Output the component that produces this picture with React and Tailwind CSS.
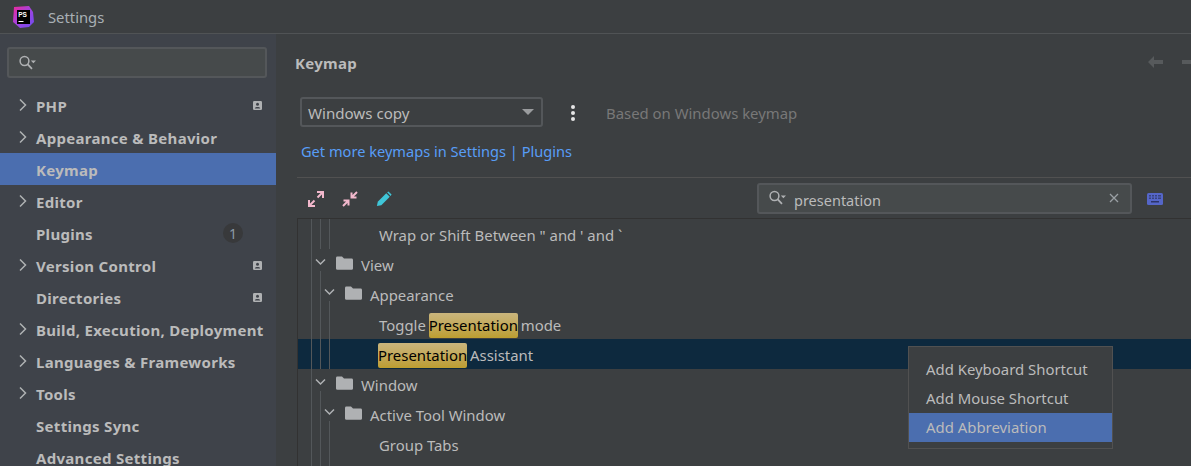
const FONT = 'font-["Noto_Sans","Open_Sans",sans-serif]';

function SearchIcon() {
  return (
    <svg width="20" height="16" viewBox="0 0 20 16" fill="none" className="shrink-0">
      <circle cx="6.5" cy="6" r="4.4" stroke="#afb1b3" strokeWidth="1.5" />
      <path d="M9.5 9.2 L14 13.8" stroke="#afb1b3" strokeWidth="1.8" />
      <path d="M12.8 5.5 H18 L15.4 8.2 Z" fill="#afb1b3" />
    </svg>
  );
}

function Badge() {
  return (
    <svg width="9" height="9" viewBox="0 0 9 9" className="shrink-0">
      <rect width="9" height="9" rx="1.2" fill="#afb1b3" />
      <circle cx="4.5" cy="3.3" r="1.5" fill="#3f434a" />
      <path d="M1.8 7.4 C2.2 5.5 6.8 5.5 7.2 7.4 Z" fill="#3f434a" />
    </svg>
  );
}

function ChevronRight() {
  return (
    <svg width="10" height="14" viewBox="0 0 10 14" fill="none" className="shrink-0">
      <path d="M2 1.5 L7.5 7 L2 12.5" stroke="#afb1b3" strokeWidth="1.5" />
    </svg>
  );
}

function SideRow({ label, arrow, badge, count, selected }) {
  return (
    <div className={`h-8 shrink-0 flex items-center pl-[18px] ${selected ? "bg-[#4b6eaf]" : ""}`}>
      <div className="w-[18px] shrink-0">{arrow && <ChevronRight />}</div>
      <span className="pt-[3px] font-bold text-[15px] tracking-[0.3px] text-[#bbbbbb] whitespace-nowrap">{label}</span>
      <div className="flex-1" />
      {badge && <div className="mr-[14px]"><Badge /></div>}
      {count && (
        <div className="mr-[33px] w-5 h-5 rounded-full bg-[#38393b] flex items-center justify-center text-[14px] text-[#8c9aa6]">
          {count}
        </div>
      )}
    </div>
  );
}

function Guide({ on }) {
  return <div className={`w-[9px] h-full shrink-0 ${on ? "border-l border-[#53575a]" : ""}`} />;
}

function Chevron({ line }) {
  return (
    <div className="w-[11px] -ml-[5px] h-full shrink-0 flex flex-col items-center">
      <svg width="11" height="22" viewBox="0 0 11 22" fill="none" className="shrink-0">
        <path d="M1 10.5 L5.5 15 L10 10.5" stroke="#afb1b3" strokeWidth="1.5" />
      </svg>
      {line && <div className="w-px flex-1 bg-[#53575a]" />}
    </div>
  );
}

function Folder() {
  return (
    <svg width="17" height="14" viewBox="0 0 17 14" className="shrink-0 -mt-[2px] ml-[10px]">
      <path d="M0 2 Q0 0.6 1.4 0.6 H6 L8 2.6 H15.6 Q17 2.6 17 4 V12.4 Q17 13.8 15.6 13.8 H1.4 Q0 13.8 0 12.4 Z" fill="#afb1b3" />
    </svg>
  );
}

function Hit({ pull }) {
  return (
    <span className={`inline-block h-[25px] leading-[24px] -mr-px rounded-[2px] bg-gradient-to-b from-[#c9b57c] to-[#bd9e2f] text-black ${pull ? "-ml-px" : ""}`}>
      Presentation
    </span>
  );
}

function TreeFolder({ guides, label }) {
  return (
    <div className="h-[30px] flex items-center pl-[13px]">
      {guides.map((g, i) => <Guide key={i} on={g} />)}
      <Chevron line />
      <Folder />
      <span className="ml-2 pt-[2px] text-[14.9px] text-[#bbbbbb] whitespace-nowrap">{label}</span>
    </div>
  );
}

function TreeLeaf({ children, selected, ml = "ml-[41px]" }) {
  return (
    <div className={`h-[30px] flex items-center pl-[13px] ${selected ? "bg-[#0d293e]" : ""}`}>
      <Guide on /><Guide on /><Guide on />
      <span className={`${ml} pt-[2px] text-[14.9px] text-[#bbbbbb] whitespace-pre`}>{children}</span>
    </div>
  );
}

function Expand({ flip }) {
  return (
    <svg width="16" height="16" viewBox="0 0 16 16" fill="none" className="shrink-0">
      <g stroke="#f2b8cc" strokeWidth="2">
        {flip ? (
          <>
            <path d="M15 1 L10 6 M9.5 1.5 V6.5 H14.5" />
            <path d="M1 15 L6 10 M1.5 9.5 H6.5 V14.5" />
          </>
        ) : (
          <>
            <path d="M9.5 6.5 L14.5 1.5 M9 1 H15 V7" />
            <path d="M6.5 9.5 L1.5 14.5 M1 9 V15 H7" />
          </>
        )}
      </g>
    </svg>
  );
}

function Pencil() {
  return (
    <svg width="16" height="16" viewBox="0 0 18 18" className="shrink-0">
      <path d="M1 17 L2 12 L11.5 2.5 L15.5 6.5 L6 16 Z" fill="#3fc6d8" />
      <path d="M12.5 1.5 L14 0.5 L17.5 4 L16.5 5.5 Z" fill="#3fc6d8" />
    </svg>
  );
}

function Keyboard() {
  return (
    <svg width="16" height="12" viewBox="0 0 16 12" className="shrink-0">
      <rect width="16" height="12" rx="1.5" fill="#5566c8" />
      <g fill="#39437f">
        <rect x="2" y="2" width="2" height="1.5" />
        <rect x="5" y="2" width="2" height="1.5" />
        <rect x="8" y="2" width="2" height="1.5" />
        <rect x="11" y="2" width="3" height="1.5" />
        <rect x="2" y="4.5" width="2" height="1.5" />
        <rect x="5" y="4.5" width="2" height="1.5" />
        <rect x="8" y="4.5" width="2" height="1.5" />
        <rect x="11" y="4.5" width="3" height="1.5" />
        <rect x="4" y="8" width="8" height="1.5" fill="#2d3468" />
      </g>
    </svg>
  );
}

function Logo() {
  return (
    <svg width="22" height="22" viewBox="0 0 22 22" className="shrink-0">
      <defs>
        <linearGradient id="ps" x1="0" y1="0" x2="1" y2="1">
          <stop offset="0" stopColor="#f0289a" />
          <stop offset="0.5" stopColor="#a044e0" />
          <stop offset="1" stopColor="#6a4cf0" />
        </linearGradient>
      </defs>
      <path d="M2 1 L17 0 L21 6 L22 16 L17 21 L8 22 L1 16 Z" fill="url(#ps)" />
      <rect x="5" y="4" width="13" height="14" fill="#000" />
      <text x="6.2" y="10.5" fontSize="6.5" fontWeight="700" fill="#fff" fontFamily="Liberation Sans">PS</text>
      <rect x="6.5" y="15" width="5" height="1" fill="#fff" />
    </svg>
  );
}

function MenuItem({ children, active }) {
  return (
    <div className={`h-[29px] flex items-center pl-[17px] text-[14.9px] text-[#bbbbbb] ${active ? "bg-[#4b6eaf]" : ""}`}>
      {children}
    </div>
  );
}

export default function App() {
  return (
    <div className={`${FONT} w-[1191px] h-[466px] overflow-hidden flex flex-col bg-[#3c3f41]`}>
      <div className="h-[34px] shrink-0 flex items-center pl-[12px] border-b border-[#505355]">
        <Logo />
        <span className="ml-[14px] pt-px text-[14.8px] text-[#a9b0b5]">Settings</span>
      </div>
      <div className="flex-1 flex min-h-0">
        <aside className="w-[276px] shrink-0 bg-[#3f434a] overflow-hidden">
          <div className="h-[31px] mt-[13px] ml-[7px] mr-[9px] mb-[11px] rounded-[3px] border-2 border-[#54575a] bg-[#464a4b] flex items-center pl-[9px]">
            <SearchIcon />
          </div>
          <SideRow label="PHP" arrow badge />
          <SideRow label="Appearance & Behavior" arrow />
          <SideRow label="Keymap" selected />
          <SideRow label="Editor" arrow />
          <SideRow label="Plugins" count="1" />
          <SideRow label="Version Control" arrow badge />
          <SideRow label="Directories" badge />
          <SideRow label="Build, Execution, Deployment" arrow />
          <SideRow label="Languages & Frameworks" arrow />
          <SideRow label="Tools" arrow />
          <SideRow label="Settings Sync" />
          <SideRow label="Advanced Settings" />
        </aside>
        <main className="flex-1 min-w-0 relative flex flex-col overflow-hidden">
          <div className="h-[59px] shrink-0 flex items-center pl-[19px]">
            <span className="font-bold text-[15px] tracking-[0.3px] text-[#bbbbbb]">Keymap</span>
            <div className="flex-1" />
            <div className="flex items-center gap-[19px] -mr-[6px] -mt-[3px]">
              <svg width="15" height="12" viewBox="0 0 15 12"><path d="M0 6 L6 0 V4 H15 V8 H6 V12 Z" fill="#575a5c" /></svg>
              <svg width="15" height="12" viewBox="0 0 15 12"><path d="M15 6 L9 0 V4 H0 V8 H9 V12 Z" fill="#575a5c" /></svg>
            </div>
          </div>
          <div className="flex items-center ml-[24px] h-[30px] shrink-0 mt-[4px]">
            <div className="w-[243px] h-[30px] rounded-[3px] border-2 border-[#54575a] flex items-center pl-[6px] pr-[7px]">
              <span className="flex-1 pt-[3px] text-[15.1px] text-[#bbbbbb]">Windows copy</span>
              <svg width="12" height="6" viewBox="0 0 12 6"><path d="M0 0 H12 L6 6 Z" fill="#9a9c9e" /></svg>
            </div>
            <div className="ml-[28px] mt-[2px] flex flex-col gap-[2px]">
              <div className="w-1 h-1 rounded-full bg-[#e6e6e6]" />
              <div className="w-1 h-1 rounded-full bg-[#e6e6e6]" />
              <div className="w-1 h-1 rounded-full bg-[#e6e6e6]" />
            </div>
            <span className="ml-[31px] pt-[3px] text-[14.9px] text-[#787878]">Based on Windows keymap</span>
          </div>
          <div className="h-[50px] shrink-0 flex items-center ml-[25px] text-[14.6px] text-[#589df6]">
            Get more keymaps in Settings | Plugins
          </div>
          <div className="h-[41px] shrink-0 ml-[21px] border-t border-[#515151] flex items-center pl-[11px] pr-[27px]">
            <div className="mt-[2px] flex items-center gap-[18px]">
              <Expand />
              <Expand flip />
              <Pencil />
            </div>
            <div className="ml-auto w-[375px] h-[31px] rounded-[3px] border-2 border-[#54575a] bg-[#464a4b] flex items-center pl-[9px] pr-[11px]">
              <SearchIcon />
              <span className="ml-[6px] pt-[6px] flex-1 text-[14.5px] text-[#bbbbbb]">presentation</span>
              <svg width="10" height="10" viewBox="0 0 10 10" fill="none"><path d="M1 1 L9 9 M9 1 L1 9" stroke="#9aa0a4" strokeWidth="1.3" /></svg>
            </div>
            <div className="ml-[15px] mt-[1px] mr-px"><Keyboard /></div>
          </div>
          <div className="flex-1 min-h-0 ml-[21px] border-t border-l border-[#323232]">
            <TreeLeaf>{"Wrap or Shift Between \" and ' and `"}</TreeLeaf>
            <TreeFolder guides={[true]} label="View" />
            <TreeFolder guides={[true, true]} label="Appearance" />
            <TreeLeaf ml="ml-[41px]">Toggle <Hit pull /> mode</TreeLeaf>
            <TreeLeaf selected ml="ml-[40px]"><Hit /> Assistant</TreeLeaf>
            <TreeFolder guides={[true]} label="Window" />
            <TreeFolder guides={[true, true]} label="Active Tool Window" />
            <TreeLeaf>Group Tabs</TreeLeaf>
            <div className="h-[7px] flex pl-[13px]"><Guide on /><Guide on /><Guide on /></div>
          </div>
          <div className="absolute left-[632px] top-[312px] w-[205px] h-[103px] border border-[#515151] bg-[#3c3f41] pt-[8px]">
            <MenuItem>Add Keyboard Shortcut</MenuItem>
            <MenuItem>Add Mouse Shortcut</MenuItem>
            <MenuItem active>Add Abbreviation</MenuItem>
          </div>
        </main>
      </div>
    </div>
  );
}
